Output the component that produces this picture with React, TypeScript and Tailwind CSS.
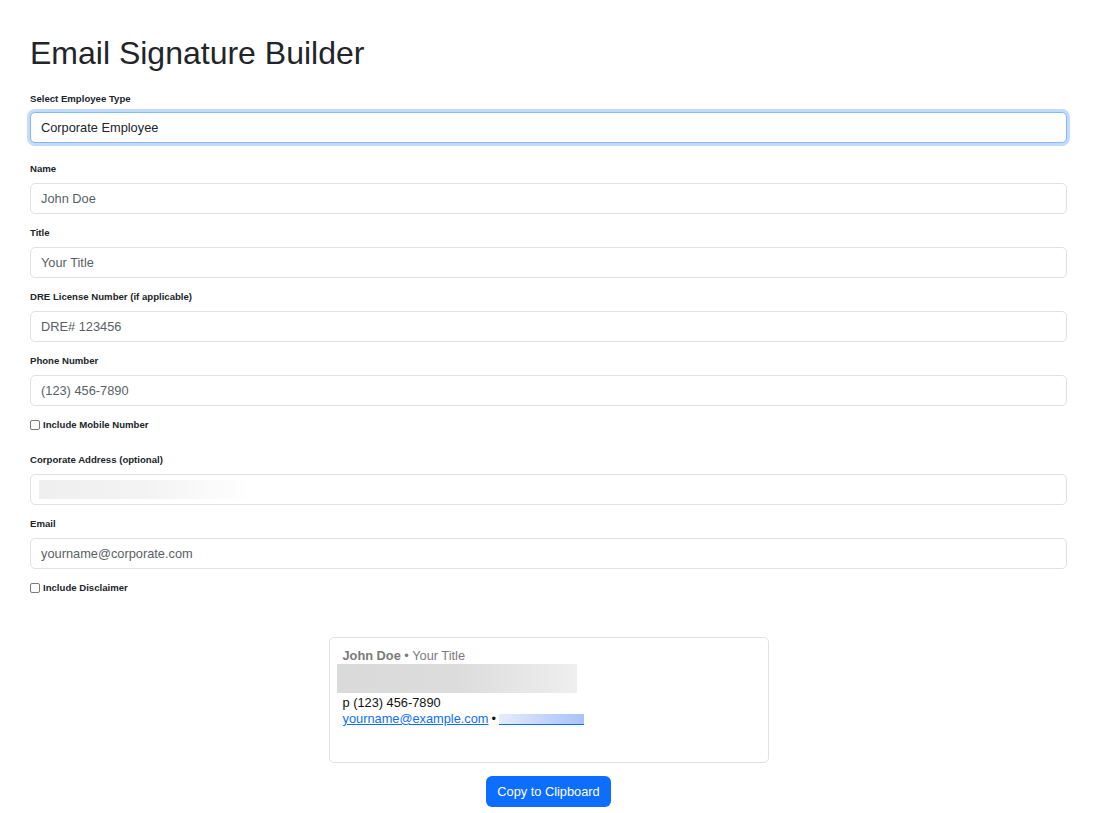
import React from "react";

const font = { fontFamily: '"Liberation Sans", Arial, sans-serif' };

function Field({ label, value }: { label: string; value: React.ReactNode }) {
  return (
    <div className="mb-[10px]">
      <div className="text-[9.6px] font-bold leading-[14px] pt-[2px] text-[#212529] mb-[7px]">{label}</div>
      <div className="h-[31px] rounded-[5px] border border-[#dee2e6] bg-white px-[10px] flex items-center text-[12.8px] text-[#595f66]">
        {value}
      </div>
    </div>
  );
}

function Check({ label }: { label: string }) {
  return (
    <div className="flex items-center h-[18px] mb-[17px]">
      <span className="w-[10px] h-[10px] rounded-[2px] border border-[#7a7a7a] bg-white mr-[3px]" />
      <span className="text-[9.6px] font-bold text-[#212529]">{label}</span>
    </div>
  );
}

export default function App() {
  return (
    <div className="min-h-[813px] bg-white pl-[30px] pr-[29px] pt-[34px]" style={font}>
      <h1 className="text-[32px] leading-[38px] text-[#212529] mb-[18px]">Email Signature Builder</h1>

      <div className="mb-[17px]">
        <div className="text-[9.6px] font-bold leading-[14px] pt-[2px] text-[#212529] mb-[6px]">Select Employee Type</div>
        <div className="h-[31px] rounded-[5px] border border-[#86b7fe] ring-[3px] ring-[#0d6efd]/25 bg-white px-[10px] flex items-center text-[12.8px] text-[#212529]">
          Corporate Employee
        </div>
      </div>

      <Field label="Name" value="John Doe" />
      <Field label="Title" value="Your Title" />
      <Field label="DRE License Number (if applicable)" value="DRE# 123456" />
      <Field label="Phone Number" value="(123) 456-7890" />
      <Check label="Include Mobile Number" />
      <Field
        label="Corporate Address (optional)"
        value={
          <span className="-ml-[2px] block h-[19px] w-[212px] bg-gradient-to-r from-[#efefef] via-[#f3f3f3] to-white" />
        }
      />
      <Field label="Email" value="yourname@corporate.com" />
      <Check label="Include Disclaimer" />

      <div className="flex flex-col items-center pt-[23px]">
        <div className="w-[440px] h-[126px] rounded-[5px] border border-[#dee2e6] bg-white pl-[13px] pt-[10px] text-[12.8px] leading-[16px]">
          <div className="text-[#7a7a7a]">
            <span className="font-bold">John Doe</span> • Your Title
          </div>
          <div className="-ml-[6px] h-[29px] w-[240px] bg-gradient-to-r from-[#dadada] via-[#dcdcdc] to-[#efefef]" />
          <div className="text-[#111] mt-[2px]">p (123) 456-7890</div>
          <div className="flex items-center text-[#111]">
            <span className="text-[#0d6efd] underline">yourname@example.com</span>
            <span className="mx-[3px]">•</span>
            <span className="flex flex-col w-[85px] h-[11px] mt-[1px]">
              <span className="h-[10px] bg-gradient-to-r from-[#e6ecfb] via-[#c5d5fb] to-[#a9c2fb]" />
              <span className="h-[1px] bg-[#0d6efd]" />
            </span>
          </div>
        </div>
        <button className="mt-[13px] h-[31px] px-[11px] rounded-[6px] bg-[#0d6efd] text-white text-[12.8px]">
          Copy to Clipboard
        </button>
      </div>
    </div>
  );
}
